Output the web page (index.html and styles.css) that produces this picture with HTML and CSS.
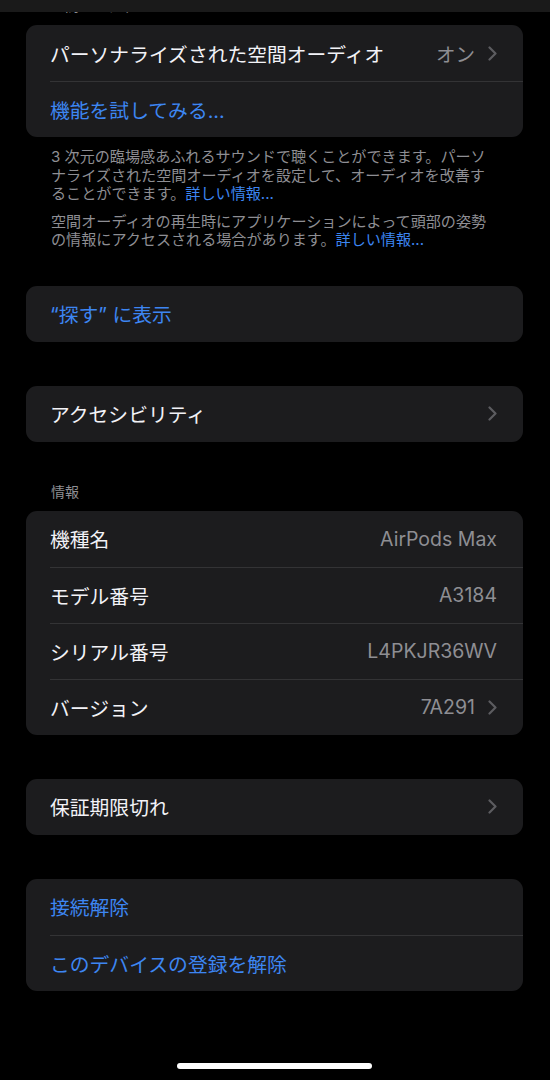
FILE: index.html
```html
<!DOCTYPE html>
<html lang="ja">
<head>
  <meta charset="UTF-8" />
  <meta name="viewport" content="width=device-width, initial-scale=1.0" />
  <title>AirPods Max</title>
  <link rel="stylesheet" href="styles.css">
</head>
<body>

<div class="navbar"></div>

<main class="page">

  <div class="group-title first">空間オーディオ</div>
  <section class="card">
    <div class="row">
      <span class="label">パーソナライズされた空間オーディオ</span>
      <span class="detail">
        <span class="value">オン</span>
        <svg class="chevron" width="9" height="15" viewBox="0 0 9 15"><path d="M1.5 1.5 L7.5 7.5 L1.5 13.5" /></svg>
      </span>
    </div>
    <div class="row">
      <span class="label link">機能を試してみる...</span>
    </div>
  </section>
  <div class="footnote">
    <p>3 次元の臨場感あふれるサウンドで聴くことができます。パーソ<br>ナライズされた空間オーディオを設定して、オーディオを改善す<br>ることができます。<a class="link">詳しい情報...</a></p>
    <p>空間オーディオの再生時にアプリケーションによって頭部の姿勢<br>の情報にアクセスされる場合があります。<a class="link">詳しい情報...</a></p>
  </div>

  <section class="card find">
    <div class="row">
      <span class="label link">“探す” に表示</span>
    </div>
  </section>

  <section class="card spaced">
    <div class="row">
      <span class="label">アクセシビリティ</span>
      <span class="detail">
        <svg class="chevron" width="9" height="15" viewBox="0 0 9 15"><path d="M1.5 1.5 L7.5 7.5 L1.5 13.5" /></svg>
      </span>
    </div>
  </section>

  <div class="group-title">情報</div>
  <section class="card">
    <div class="row">
      <span class="label">機種名</span>
      <span class="detail"><span class="value">AirPods Max</span></span>
    </div>
    <div class="row">
      <span class="label">モデル番号</span>
      <span class="detail"><span class="value">A3184</span></span>
    </div>
    <div class="row">
      <span class="label">シリアル番号</span>
      <span class="detail"><span class="value">L4PKJR36WV</span></span>
    </div>
    <div class="row">
      <span class="label">バージョン</span>
      <span class="detail">
        <span class="value">7A291</span>
        <svg class="chevron" width="9" height="15" viewBox="0 0 9 15"><path d="M1.5 1.5 L7.5 7.5 L1.5 13.5" /></svg>
      </span>
    </div>
  </section>

  <section class="card spaced">
    <div class="row">
      <span class="label">保証期限切れ</span>
      <span class="detail">
        <svg class="chevron" width="9" height="15" viewBox="0 0 9 15"><path d="M1.5 1.5 L7.5 7.5 L1.5 13.5" /></svg>
      </span>
    </div>
  </section>

  <section class="card spaced">
    <div class="row">
      <span class="label link">接続解除</span>
    </div>
    <div class="row">
      <span class="label link">このデバイスの登録を解除</span>
    </div>
  </section>

</main>

<div class="home-indicator"></div>

</body>
</html>
```

FILE: styles.css
```css
html, body {
  margin: 0;
  height: 1080px;
  overflow: hidden;
}
body {
  position: relative;
  background-color: #000;
  color: #f2f2f7;
  font-family: Inter, "Noto Sans CJK JP", sans-serif;
}
.navbar {
  position: absolute;
  top: 0;
  left: 0;
  right: 0;
  height: 12px;
  background-color: #1a1a1a;
  z-index: 2;
}
.page {
  padding: 0 27px 0 26px;
}
.group-title {
  margin: 41px 0 10px 25px;
  font-size: 14px;
  line-height: 18px;
  color: #8e8e93;
}
.group-title.first {
  margin-top: -3px;
}
.card {
  background-color: #1c1c1e;
  border-radius: 11px;
  overflow: hidden;
}
.card.find {
  margin-top: 36px;
}
.card.spaced {
  margin-top: 44px;
}
.row {
  display: flex;
  align-items: center;
  justify-content: space-between;
  height: 56px;
  margin-left: 24px;
  padding-right: 26px;
  box-sizing: border-box;
}
.row + .row {
  border-top: 1px solid #333335;
}
.label {
  font-size: 19.8px;
  white-space: nowrap;
}
.link {
  color: #3d86f2;
}
.detail {
  display: flex;
  align-items: center;
  gap: 13px;
}
.value {
  font-size: 19.5px;
  color: #8e8e93;
}
.chevron path {
  fill: none;
  stroke: #5c5c60;
  stroke-width: 2.2;
  stroke-linecap: round;
  stroke-linejoin: round;
}
.footnote {
  margin: 11px 0 0 25px;
  font-size: 15.1px;
  line-height: 18.5px;
  color: #8e8e93;
}
.footnote p {
  margin: 0 0 9px;
  white-space: nowrap;
}
.home-indicator {
  position: absolute;
  top: 1063px;
  left: 177px;
  width: 195px;
  height: 6px;
  border-radius: 3px;
  background-color: #fff;
}
```
